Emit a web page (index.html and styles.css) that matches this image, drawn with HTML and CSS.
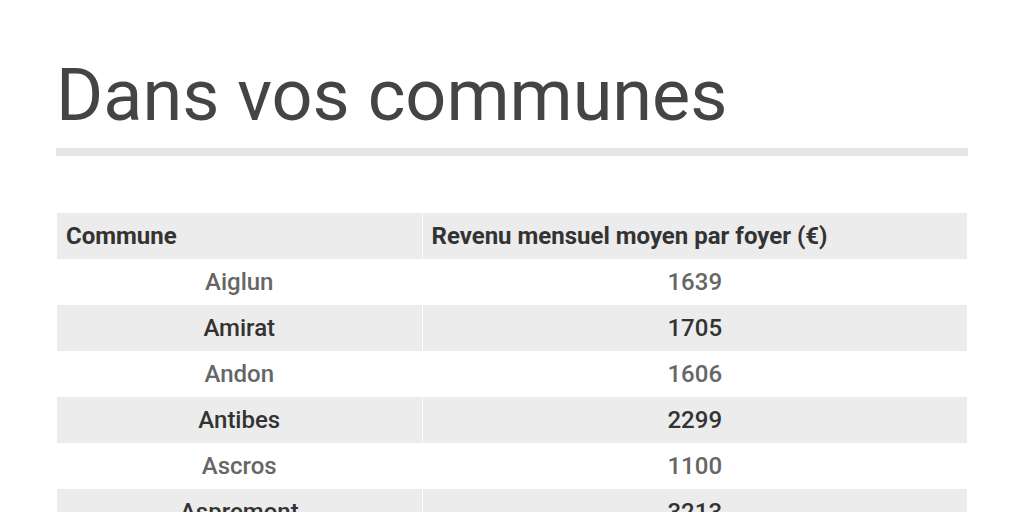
FILE: index.html
```html
<!DOCTYPE html>
<html lang="fr">
<head>
<meta charset="utf-8">
<title>Dans vos communes</title>
<link rel="stylesheet" href="styles.css">
</head>
<body>
<main class="page">
  <h1 class="title">Dans vos communes</h1>
  <div class="rule"></div>
  <table class="data">
    <thead>
      <tr><th class="c1">Commune</th><th class="c2">Revenu mensuel moyen par foyer (€)</th></tr>
    </thead>
    <tbody>
      <tr><td>Aiglun</td><td>1639</td></tr>
      <tr><td>Amirat</td><td>1705</td></tr>
      <tr><td>Andon</td><td>1606</td></tr>
      <tr><td>Antibes</td><td>2299</td></tr>
      <tr><td>Ascros</td><td>1100</td></tr>
      <tr><td>Aspremont</td><td>3213</td></tr>
    </tbody>
  </table>
</main>
</body>
</html>
```
FILE: styles.css
```css
html, body {
  margin: 0;
  padding: 0;
  background: #fff;
  overflow: hidden;
}
body {
  font-family: Roboto, "Liberation Sans", sans-serif;
}
.page {
  width: 912px;
  padding: 52px 0 0 56px;
}
.title {
  margin: 0;
  font-size: 72px;
  font-weight: 400;
  line-height: 88px;
  color: #444;
  letter-spacing: 0;
}
.rule {
  margin-top: 8px;
  height: 8px;
  background: #e6e6e6;
}
.data {
  margin: 57px 1px 0;
  width: 910px;
  border-collapse: collapse;
  font-size: 24px;
  font-weight: 500;
}
.data th, .data td {
  height: 46px;
  padding: 0 9px;
  box-sizing: border-box;
}
.data th {
  background: #ececec;
  color: #333;
  text-align: left;
}
.data .c1 { width: 365px; }
.data th + th, .data td + td { border-left: 1px solid #fff; }
.data td {
  text-align: center;
  color: #666;
}
.data tbody tr:nth-child(even) td {
  background: #ececec;
  color: #333;
}
```
